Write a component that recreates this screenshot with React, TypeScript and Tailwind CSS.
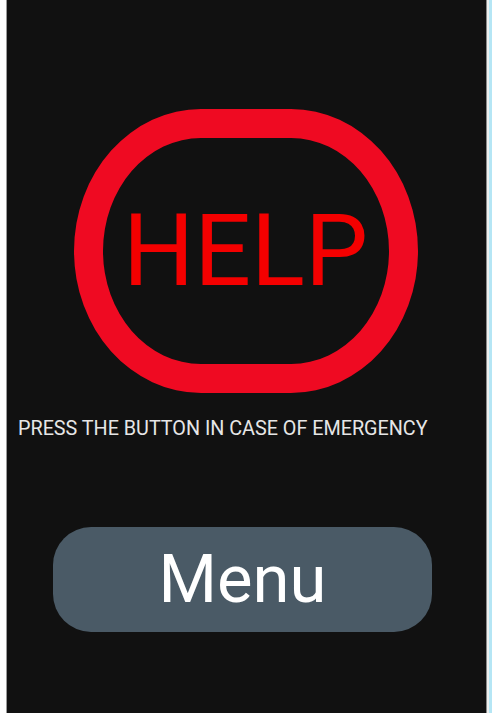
export default function App() {
  return (
    <div className="flex h-[713px] w-[492px] bg-white" style={{ fontFamily: "Roboto, 'Liberation Sans', sans-serif" }}>
      <div className="w-[6px] bg-white" />
      <div className="w-[1px] bg-[#9a9a9a]" />
      <main className="flex flex-1 flex-col bg-[#111111]">
        <div className="mx-auto mt-[109px] flex h-[284px] w-[344px] translate-x-[-1px] items-center justify-center rounded-[127px/142px] border-[29px] border-[#ef0a22]">
          <span className="text-[100px] leading-none text-[#f40000]">HELP</span>
        </div>
        <p className="ml-[11px] mt-[23px] text-[19.8px] leading-[26px] tracking-[-0.02px] text-[#e6e6e6]">
          PRESS THE BUTTON IN CASE OF EMERGENCY
        </p>
        <button className="ml-[46px] mt-[85px] flex h-[105px] w-[379px] items-center justify-center rounded-[38px] bg-[#4a5a66]">
          <span className="text-[67px] leading-none text-white">Menu</span>
        </button>
      </main>
      <div className="w-[1px] bg-[#8a8a8a]" />
      <div className="w-[2px] bg-[#eeeeee]" />
      <div className="w-[3px] bg-[#b5e6f5]" />
    </div>
  );
}
